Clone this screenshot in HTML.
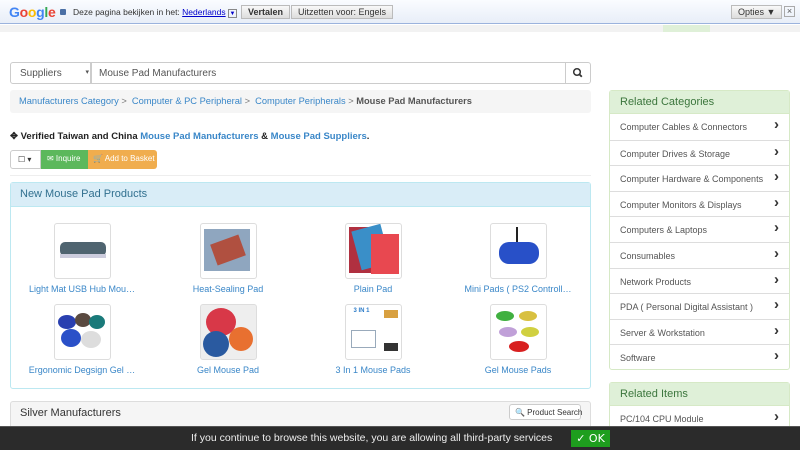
<!DOCTYPE html>
<html><head><meta charset="utf-8"><style>
*{box-sizing:border-box;margin:0;padding:0}
body{width:800px;height:450px;overflow:hidden;font-family:"Liberation Sans",Arial,sans-serif;font-size:9px;color:#333;background:#fff;position:relative}
.abs{position:absolute;white-space:nowrap}
a{color:#3a87c8;text-decoration:none}
.gbar{left:0;top:0;width:800px;height:24px;background:linear-gradient(#fafcff,#e8eef8);border-bottom:1px solid #9bb3dd}
.btn{border:1px solid #bbb;background:linear-gradient(#f8f8f8,#ddd);font-size:9px;padding:2px 6px;top:5px;height:14px;line-height:9px}
.side{left:609px;width:181px;border:1px solid #d6e9c6}
.side .h{background:#dff0d8;color:#3c763d;font-size:11px;padding:5px 10px;height:23px;border-bottom:1px solid #d6e9c6}
.side .i{height:25.6px;border-top:1px solid #ddd;padding:8px 10px;font-size:9px;color:#555;position:relative}
.side .h + .i{border-top:none}
.side .i:after{content:"›";position:absolute;right:10px;top:2px;font-size:15px;font-weight:bold;color:#333}
.prod{position:absolute;width:120px;text-align:center}
.prod .img{width:57px;height:56px;border:1px solid #ddd;border-radius:3px;margin:0 auto;background:#fff;padding:3px;position:relative;overflow:hidden}
.prod .cap{color:#3a87c8;font-size:9px;margin-top:5px;white-space:nowrap}
</style></head><body>
<div class="abs gbar"></div>
<div class="abs" style="left:9px;top:4px;font-size:14px;font-weight:bold;letter-spacing:-0.3px"><span style="color:#4285f4">G</span><span style="color:#ea4335">o</span><span style="color:#fbbc05">o</span><span style="color:#4285f4">g</span><span style="color:#34a853">l</span><span style="color:#ea4335">e</span></div>
<div class="abs" style="left:60px;top:9px;width:6px;height:6px;background:#4a6fa5;border-radius:1px"></div>
<div class="abs" style="left:73px;top:7px;font-size:8.5px">Deze pagina bekijken in het: <span style="color:#00c;text-decoration:underline">Nederlands</span> <span style="display:inline-block;width:9px;height:9px;border:1px solid #888;font-size:6px;line-height:8px;text-align:center;color:#00c">▼</span></div>
<div class="abs btn" style="left:241px;font-weight:bold">Vertalen</div>
<div class="abs btn" style="left:291px">Uitzetten voor: Engels</div>
<div class="abs btn" style="left:731px">Opties ▼</div>
<div class="abs" style="left:784px;top:6px;width:11px;height:11px;border:1px solid #aaa;font-size:9px;line-height:9px;text-align:center;color:#555">×</div>
<div class="abs" style="left:0;top:25px;width:800px;height:7px;background:#f2f2f2"></div>
<div class="abs" style="left:663px;top:25px;width:47px;height:7px;background:#dff0d8"></div>

<div class="abs" style="left:10px;top:62px;width:81px;height:22px;border:1px solid #ccc;border-radius:3px 0 0 3px;padding:5px 9px;font-size:10px;color:#555">Suppliers<span style="position:absolute;right:1px;top:5px;font-size:7px">▾</span></div>
<div class="abs" style="left:91px;top:62px;width:475px;height:22px;border:1px solid #ccc;padding:5px 7px;font-size:10px;color:#555">Mouse Pad Manufacturers</div>
<div class="abs" style="left:565px;top:62px;width:26px;height:22px;border:1px solid #ccc;border-radius:0 3px 3px 0"><svg width="24" height="20" viewBox="0 0 24 20"><circle cx="11" cy="9" r="3.3" fill="none" stroke="#333" stroke-width="1.5"/><path d="M13.3 11.3l2.5 2.5" stroke="#333" stroke-width="1.8"/></svg></div>

<div class="abs" style="left:10px;top:90px;width:581px;height:23px;background:#f5f5f5;border-radius:3px;padding:6px 9px;font-size:9.3px;color:#777"><a>Manufacturers Category</a> &gt; &nbsp;<a>Computer &amp; PC Peripheral</a> &gt; &nbsp;<a>Computer Peripherals</a> &gt; <b style="color:#555">Mouse Pad Manufacturers</b></div>

<div class="abs" style="left:10px;top:131px;font-size:9.5px;font-weight:bold;color:#222">✥ Verified Taiwan and China <a>Mouse Pad Manufacturers</a> &amp; <a>Mouse Pad Suppliers</a>.</div>
<div class="abs" style="left:10px;top:150px;width:31px;height:19px;border:1px solid #ccc;border-radius:3px 0 0 3px;font-size:8px;padding:4px 7px">☐ ▾</div>
<div class="abs" style="left:41px;top:150px;width:47px;height:19px;background:#5cb85c;color:#fff;font-size:8px;padding:4px 6px">✉ Inquire</div>
<div class="abs" style="left:88px;top:150px;width:69px;height:19px;background:#f0ad4e;color:#fff;font-size:8px;padding:4px 5px;border-radius:0 3px 3px 0">🛒 Add to Basket</div>
<div class="abs" style="left:10px;top:175px;width:581px;height:1px;background:#eee"></div>

<div class="abs" style="left:10px;top:182px;width:581px;height:207px;border:1px solid #bce8f1;border-radius:3px">
<div style="background:#d9edf7;height:24px;border-bottom:1px solid #bce8f1;padding:5px 9px;font-size:11px;color:#31708f">New Mouse Pad Products</div>
</div>
<div class="prod" style="left:22px;top:223px"><div class="img"><div style="position:absolute;left:5px;top:18px;width:46px;height:14px;background:#4f6470;border-radius:5px"></div><div style="position:absolute;left:5px;top:30px;width:46px;height:4px;background:#ccd"></div></div><div class="cap">Light Mat USB Hub Mou…</div></div>
<div class="prod" style="left:168px;top:223px"><div class="img"><div style="position:absolute;left:3px;top:5px;width:46px;height:42px;background:#8fa6bf"></div><div style="position:absolute;left:12px;top:15px;width:30px;height:22px;background:#b05040;transform:rotate(-20deg)"></div></div><div class="cap">Heat-Sealing Pad</div></div>
<div class="prod" style="left:313px;top:223px"><div class="img"><div style="position:absolute;left:3px;top:3px;width:22px;height:46px;background:#b03040"></div><div style="position:absolute;left:10px;top:3px;width:30px;height:40px;background:#3a8fc8;transform:rotate(-15deg)"></div><div style="position:absolute;left:25px;top:10px;width:28px;height:40px;background:#e84850"></div></div><div class="cap">Plain Pad</div></div>
<div class="prod" style="left:458px;top:223px"><div class="img"><div style="position:absolute;left:8px;top:18px;width:40px;height:22px;background:#2850c8;border-radius:10px"></div><div style="position:absolute;left:25px;top:3px;width:2px;height:15px;background:#222"></div></div><div class="cap">Mini Pads ( PS2 Controll…</div></div>
<div class="prod" style="left:22px;top:304px"><div class="img"><div style="position:absolute;left:3px;top:10px;width:18px;height:14px;background:#2a40b0;border-radius:50%"></div><div style="position:absolute;left:20px;top:8px;width:16px;height:14px;background:#5a4a40;border-radius:50%"></div><div style="position:absolute;left:34px;top:10px;width:16px;height:14px;background:#1a7a7a;border-radius:50%"></div><div style="position:absolute;left:6px;top:24px;width:20px;height:18px;background:#2a50c8;border-radius:50%"></div><div style="position:absolute;left:26px;top:26px;width:20px;height:17px;background:#ddd;border-radius:50%"></div></div><div class="cap">Ergonomic Degsign Gel …</div></div>
<div class="prod" style="left:168px;top:304px"><div class="img" style="background:#eee"><div style="position:absolute;left:5px;top:3px;width:30px;height:28px;background:#d83848;border-radius:50%"></div><div style="position:absolute;left:28px;top:22px;width:24px;height:24px;background:#e87030;border-radius:50%"></div><div style="position:absolute;left:2px;top:26px;width:26px;height:26px;background:#2a5aa0;border-radius:50%"></div></div><div class="cap">Gel Mouse Pad</div></div>
<div class="prod" style="left:313px;top:304px"><div class="img"><div style="position:absolute;left:8px;top:3px;font-size:6px;color:#2a7ac8;font-weight:bold">3 IN 1</div><div style="position:absolute;left:5px;top:25px;width:25px;height:18px;border:1px solid #9ab"></div><div style="position:absolute;left:38px;top:5px;width:14px;height:8px;background:#d8a040"></div><div style="position:absolute;left:38px;top:38px;width:14px;height:8px;background:#333"></div></div><div class="cap">3 In 1 Mouse Pads</div></div>
<div class="prod" style="left:458px;top:304px"><div class="img"><div style="position:absolute;left:5px;top:6px;width:18px;height:10px;background:#40b040;border-radius:50%"></div><div style="position:absolute;left:28px;top:6px;width:18px;height:10px;background:#d8c040;border-radius:50%"></div><div style="position:absolute;left:8px;top:22px;width:18px;height:10px;background:#c0a0d8;border-radius:50%"></div><div style="position:absolute;left:30px;top:22px;width:18px;height:10px;background:#d0d040;border-radius:50%"></div><div style="position:absolute;left:18px;top:36px;width:20px;height:11px;background:#d82020;border-radius:50%"></div></div><div class="cap">Gel Mouse Pads</div></div>

<div class="abs" style="left:10px;top:401px;width:581px;height:30px;border:1px solid #ddd;border-radius:3px;background:#f5f5f5;padding:5px 9px;font-size:11px;color:#333">Silver Manufacturers</div>
<div class="abs" style="left:509px;top:404px;width:72px;height:16px;border:1px solid #ccc;border-radius:3px;background:#fff;font-size:8px;padding:3px 5px">🔍 Product Search</div>

<div class="abs side" style="top:90px;height:280px;border-radius:3px">
<div class="h">Related Categories</div>
<div class="i">Computer Cables &amp; Connectors</div>
<div class="i">Computer Drives &amp; Storage</div>
<div class="i">Computer Hardware &amp; Components</div>
<div class="i">Computer Monitors &amp; Displays</div>
<div class="i">Computers &amp; Laptops</div>
<div class="i">Consumables</div>
<div class="i">Network Products</div>
<div class="i">PDA ( Personal Digital Assistant )</div>
<div class="i">Server &amp; Workstation</div>
<div class="i">Software</div>
</div>
<div class="abs side" style="top:382px;height:60px;border-radius:3px">
<div class="h">Related Items</div>
<div class="i">PC/104 CPU Module</div>
</div>

<div class="abs" style="left:0;top:426px;width:800px;height:24px;background:#2b2b2b;border-top:1px solid #555;color:#eee;font-family:'Liberation Sans',sans-serif;font-size:10.5px;padding-top:5px;padding-left:191px">If you continue to browse this website, you are allowing all third-party services</div>
<div class="abs" style="left:571px;top:430px;width:39px;height:17px;background:#1e9e1e;color:#fff;font-family:'DejaVu Sans',sans-serif;font-size:11px;text-align:center;line-height:17px">✓ OK</div>
</body></html>
